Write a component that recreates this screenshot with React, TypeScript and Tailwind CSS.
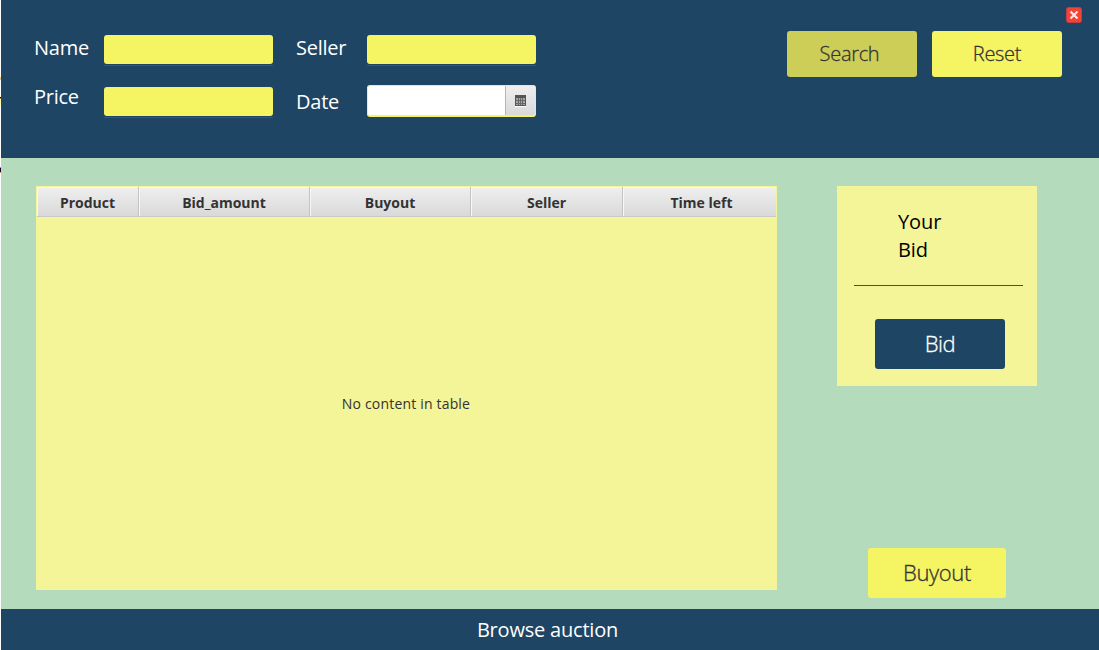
import type { ReactNode } from "react";

const columns: { title: string; className: string }[] = [
  { title: "Product", className: "w-[102px]" },
  { title: "Bid_amount", className: "w-[171px]" },
  { title: "Buyout", className: "w-[161px]" },
  { title: "Seller", className: "w-[152px]" },
  { title: "Time left", className: "w-[153px] border-r-0 pl-1" },
];

function Label({ className = "", children }: { className?: string; children: ReactNode }) {
  return (
    <div className={`h-7 whitespace-nowrap text-[20px] leading-7 tracking-[-0.25px] text-white ${className}`}>
      {children}
    </div>
  );
}

function Button({ className, children }: { className: string; children: ReactNode }) {
  return (
    <button className={`block rounded-[3px] font-light [-webkit-text-stroke:0.3px_currentColor] ${className}`}>
      {children}
    </button>
  );
}

function TextInput() {
  return (
    <div className="h-[31px] w-[169px] border-b border-[#4d5054]">
      <div className="h-[29px] rounded-[3px] bg-[#f5f463]" />
    </div>
  );
}

function CalendarIcon() {
  return (
    <svg width="11" height="12" viewBox="0 0 11 12" shapeRendering="crispEdges">
      <rect y="11" width="11" height="1" fill="#fff" />
      <rect width="11" height="11" fill="#555" />
      <path d="M1 3h9v7H1z" fill="#a5a5a5" />
      <path d="M3 3h1v7H3zM5 3h1v7H5zM7 3h1v7H7zM1 5h9v1H1zM1 8h9v1H1z" fill="#686868" />
    </svg>
  );
}

function DatePicker() {
  return (
    <div className="flex h-8 w-[169px] overflow-hidden rounded-[3px] border border-b-2 border-[#f5f463] bg-white">
      <div className="flex-1" />
      <div className="flex w-[30px] items-start justify-center border-l border-[#b5b5b5] bg-gradient-to-b from-[#efefef] to-[#d9d9d9] pt-[9px]">
        <CalendarIcon />
      </div>
    </div>
  );
}

function Header() {
  return (
    <header className="flex h-[158px] shrink-0 bg-[#1e4564] pl-[33px]">
      <div className="w-[70px] pt-[34px]">
        <Label>Name</Label>
        <Label className="mt-[21px]">Price</Label>
      </div>
      <div className="w-[192px] space-y-[21px] pt-[35px]">
        <TextInput />
        <TextInput />
      </div>
      <div className="w-[71px] pt-[34px]">
        <Label>Seller</Label>
        <Label className="mt-[26px]">Date</Label>
      </div>
      <div className="pt-[35px]">
        <TextInput />
        <div className="mt-[19px]">
          <DatePicker />
        </div>
      </div>
      <div className="ml-[251px] flex gap-[15px] pt-[31px]">
        <Button className="h-[46px] w-[130px] bg-[#cdce58] pb-px pr-[5px] text-[20px] tracking-[-0.3px] text-[#333]">
          Search
        </Button>
        <Button className="h-[46px] w-[130px] bg-[#f5f463] pb-px text-[20px] tracking-[-0.3px] text-[#333]">
          Reset
        </Button>
      </div>
      <svg className="ml-1 mt-[7px] shrink-0" width="16" height="16" viewBox="0 0 16 16">
        <rect x="0.5" y="0.5" width="15" height="15" rx="2" fill="#f44336" stroke="#c23e42" />
        <path d="M4.5 4.5l7 7M11.5 4.5l-7 7" stroke="#ffe3e1" strokeWidth="2.2" />
      </svg>
    </header>
  );
}

function AuctionTable() {
  return (
    <section className="flex h-[404px] w-[741px] flex-col bg-[#f4f498]">
      <div className="mx-px mt-px flex h-[30px] border-b border-[#c8c8c8] bg-gradient-to-b from-[#efefef] to-[#d9d9d9]">
        {columns.map((c) => (
          <div
            key={c.title}
            className={`flex shrink-0 items-center justify-center border-r border-[#c3c3c3] pt-px text-[14px] font-bold text-[#333] shadow-[inset_1px_1px_0_#f8f8f8] ${c.className}`}
          >
            {c.title}
          </div>
        ))}
      </div>
      <div className="flex flex-1 items-center justify-center pr-px text-[14px] tracking-[0.18px] text-[#333]">
        No content in table
      </div>
    </section>
  );
}

function BidPanel() {
  return (
    <section className="flex h-[200px] w-[200px] flex-col bg-[#f4f498]">
      <p className="ml-[61px] mt-[22px] text-[20px] leading-7 tracking-[-0.1px] text-black">
        Your
        <br />
        Bid
      </p>
      <div className="ml-[17px] mt-[21px] h-px w-[169px] bg-[#4d4d4d]" />
      <Button className="ml-[38px] mt-[33px] h-[50px] w-[130px] bg-[#1e4564] pb-0.5 text-[22px] leading-[48px] tracking-[-0.4px] text-white">
        Bid
      </Button>
    </section>
  );
}

export default function App() {
  return (
    <div className="flex h-[650px] w-[1099px] overflow-hidden bg-white font-['Open_Sans','Noto_Sans',sans-serif]">
      <div className="w-px shrink-0">
        <div className="mt-[77px] h-[3px] bg-[#f3c95a]" />
        <div className="mt-[17px] h-px bg-black" />
        <div className="h-px bg-[#c98f3a]" />
        <div className="h-[6px] bg-[#ffffb0]" />
        <div className="mt-[62px] h-px bg-[#d98a30]" />
        <div className="h-1 bg-[#10003a]" />
        <div className="h-px bg-[#d9a060]" />
      </div>
      <div className="flex flex-1 flex-col">
        <Header />
        <main className="flex h-[451px] bg-[#b4dbbc] pl-[35px] pt-7">
          <AuctionTable />
          <div className="ml-[60px]">
            <BidPanel />
            <Button className="ml-[31px] mt-[162px] h-[50px] w-[138px] bg-[#f5f463] pb-0.5 text-[22px] leading-[48px] tracking-[-0.35px] text-[#333]">
              Buyout
            </Button>
          </div>
        </main>
        <footer className="h-[41px] bg-[#1e4564] pr-[5px] text-center text-[20px] leading-[41px] tracking-[-0.2px] text-white">
          Browse auction
        </footer>
      </div>
    </div>
  );
}
